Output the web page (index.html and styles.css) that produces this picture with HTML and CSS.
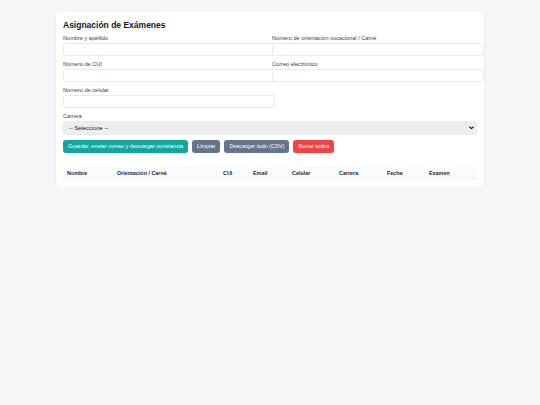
FILE: index.html
```html
<!DOCTYPE html>
<html lang="es">
<head>
<meta charset="utf-8">
<title>Asignación de Exámenes</title>
<link rel="stylesheet" href="styles.css">
</head>
<body>
<main class="card">
  <h1 class="title">Asignación de Exámenes</h1>
  <form class="form">
    <div class="grid">
      <div class="field">
        <label class="label">Nombre y apellido</label>
        <input class="input" type="text">
      </div>
      <div class="field">
        <label class="label">Número de orientación vocacional / Carné</label>
        <input class="input" type="text">
      </div>
      <div class="field">
        <label class="label">Número de CUI</label>
        <input class="input" type="text">
      </div>
      <div class="field">
        <label class="label">Correo electrónico</label>
        <input class="input" type="email">
      </div>
      <div class="field">
        <label class="label">Número de celular</label>
        <input class="input" type="text">
      </div>
    </div>
    <div class="field field-full">
      <label class="label">Carrera</label>
      <div class="select-wrap">
        <select class="select">
          <option>-- Seleccione --</option>
        </select>
        <svg class="chevron" width="5" height="4" viewBox="0 0 5 4" aria-hidden="true">
          <polyline points="0.8,1 2.5,2.7 4.2,1" fill="none" stroke="#111827" stroke-width="1.1" stroke-linecap="round" stroke-linejoin="round"/>
        </svg>
      </div>
    </div>
    <div class="actions">
      <button type="button" class="btn btn-teal">Guardar, enviar correo y descargar constancia</button>
      <button type="button" class="btn btn-slate">Limpiar</button>
      <button type="button" class="btn btn-slate">Descargar todo (CSV)</button>
      <button type="button" class="btn btn-red">Borrar todos</button>
    </div>
  </form>
  <table class="table">
    <thead>
      <tr>
        <th class="c1">Nombre</th>
        <th class="c2">Orientación / Carné</th>
        <th class="c3">CUI</th>
        <th class="c4">Email</th>
        <th class="c5">Celular</th>
        <th class="c6">Carrera</th>
        <th class="c7">Fecha</th>
        <th class="c8">Examen</th>
      </tr>
    </thead>
    <tbody></tbody>
  </table>
</main>
</body>
</html>
```

FILE: styles.css
```css
* { box-sizing: content-box; }

body {
  margin: 0;
  background: #f4f6fa;
  font-family: "Liberation Sans", Arial, sans-serif;
  color: #1f2937;
}

.card {
  width: 414px;
  margin: 12px 0 0 56px;
  padding: 8px 7px 7px;
  background: #ffffff;
  border-radius: 5px;
  box-shadow: 0 1px 4px rgba(15, 23, 42, 0.06);
}

.title {
  margin: 0 0 4px;
  font-size: 8.5px;
  line-height: 11px;
  font-weight: 700;
  color: #111827;
}

.grid {
  display: grid;
  grid-template-columns: 205px 205px;
  column-gap: 4px;
  row-gap: 5px;
}

.field {
  display: flex;
  flex-direction: column;
  min-width: 0;
}

.field-full {
  margin-top: 5px;
}

.label {
  font-size: 5.6px;
  line-height: 7px;
  margin-bottom: 0.5px;
  color: #374151;
}

.input {
  width: 100%;
  height: 11.5px;
  padding: 0 2.5px;
  margin: 0;
  border: 1px solid #e8eaee;
  border-radius: 3px;
  background: #ffffff;
  font-size: 5.6px;
  font-family: inherit;
}

.select-wrap {
  position: relative;
}

.select {
  display: block;
  width: 414px;
  height: 14px;
  padding: 0 5px;
  margin: 0;
  border: 1px solid #ebebeb;
  border-radius: 3px;
  background-color: #eeeeee;
  font-size: 5.8px;
  font-family: inherit;
  color: #111827;
  box-sizing: border-box;
  appearance: none;
  -webkit-appearance: none;
}

.chevron {
  position: absolute;
  right: 3px;
  top: 5px;
}

.actions {
  display: flex;
  gap: 4px;
  margin-top: 5px;
}

.btn {
  height: 13px;
  padding: 0 5px;
  border: 0;
  border-radius: 3px;
  color: #ffffff;
  font-size: 5.6px;
  font-family: inherit;
  line-height: 13px;
  box-sizing: border-box;
}

.btn-teal { background: #13a59e; }
.btn-slate { background: #64748b; }
.btn-red { background: #ef4444; }

.table {
  width: 414px;
  margin-top: 14px;
  border-collapse: collapse;
  table-layout: fixed;
}

.table th {
  height: 12.5px;
  padding: 0 4px;
  text-align: left;
  font-size: 5.4px;
  font-weight: 700;
  color: #1f2937;
  background: #f8fafc;
  border-bottom: 1px solid #f1f3f6;
  box-sizing: border-box;
}

.c1 { width: 50px; }
.c2 { width: 106px; }
.c3 { width: 30px; }
.c4 { width: 39px; }
.c5 { width: 47px; }
.c6 { width: 48px; }
.c7 { width: 42px; }
.c8 { width: 52px; }
```
